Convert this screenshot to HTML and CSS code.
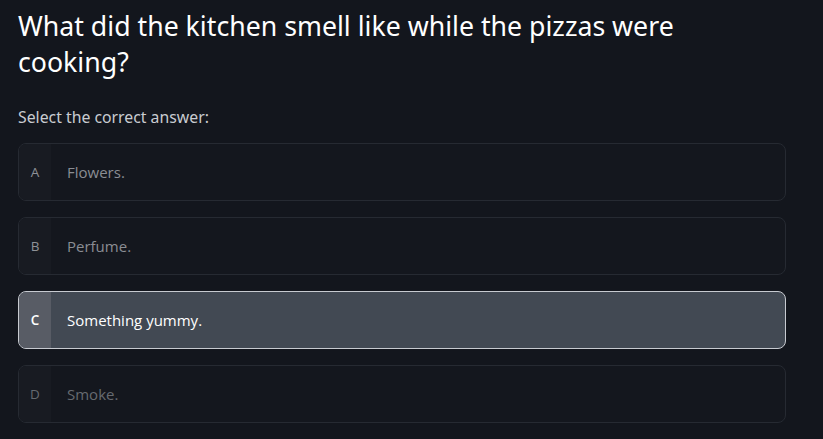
FILE: index.html
```html
<!DOCTYPE html>
<html lang="en">
<head>
<meta charset="utf-8">
<title>Question</title>
<link rel="stylesheet" href="styles.css">
</head>
<body>
<main class="quiz">
  <h1 class="question">What did the kitchen smell like while the pizzas were cooking?</h1>
  <p class="prompt">Select the correct answer:</p>
  <ul class="options">
    <li class="option"><span class="letter">A</span><span class="label">Flowers.</span></li>
    <li class="option"><span class="letter">B</span><span class="label">Perfume.</span></li>
    <li class="option selected"><span class="letter">C</span><span class="label">Something yummy.</span></li>
    <li class="option faded"><span class="letter">D</span><span class="label">Smoke.</span></li>
  </ul>
</main>
</body>
</html>
```
FILE: styles.css
```css
html, body {
  margin: 0;
  padding: 0;
  background: #13161d;
}
body {
  font-family: "Noto Sans", "Open Sans", sans-serif;
  color: #e6e8eb;
}
.quiz {
  padding: 8px 37px 0 18px;
}
.question {
  margin: 0;
  font-family: "Noto Sans", sans-serif;
  font-weight: 400;
  font-size: 26.7px;
  line-height: 36px;
  color: #ffffff;
  max-width: 700px;
}
.prompt {
  margin: 26px 0 0;
  font-family: "Noto Sans", sans-serif;
  font-size: 15.8px;
  line-height: 22px;
  color: #c9ccd1;
}
.options {
  list-style: none;
  margin: 15px 0 0;
  padding: 0;
  display: flex;
  flex-direction: column;
  gap: 16px;
}
.option {
  display: flex;
  align-items: stretch;
  height: 58px;
  box-sizing: border-box;
  border: 1px solid #262a32;
  border-radius: 8px;
  background: #14171e;
  overflow: hidden;
  font-family: "Open Sans", sans-serif;
  font-size: 15px;
}
.letter {
  width: 32px;
  flex: none;
  display: flex;
  align-items: center;
  justify-content: center;
  background: #181b22;
  color: #8e9197;
  font-size: 13.5px;
}
.label {
  display: flex;
  align-items: center;
  padding-left: 16px;
  color: #8a8d93;
}
.option.selected {
  background: #424953;
  border-color: #c7cad0;
}
.option.selected .letter {
  background: #585c65;
  color: #ffffff;
  font-weight: 600;
}
.option.selected .label {
  color: #ffffff;
}
.option.faded .letter,
.option.faded .label {
  color: #666a70;
}
```
